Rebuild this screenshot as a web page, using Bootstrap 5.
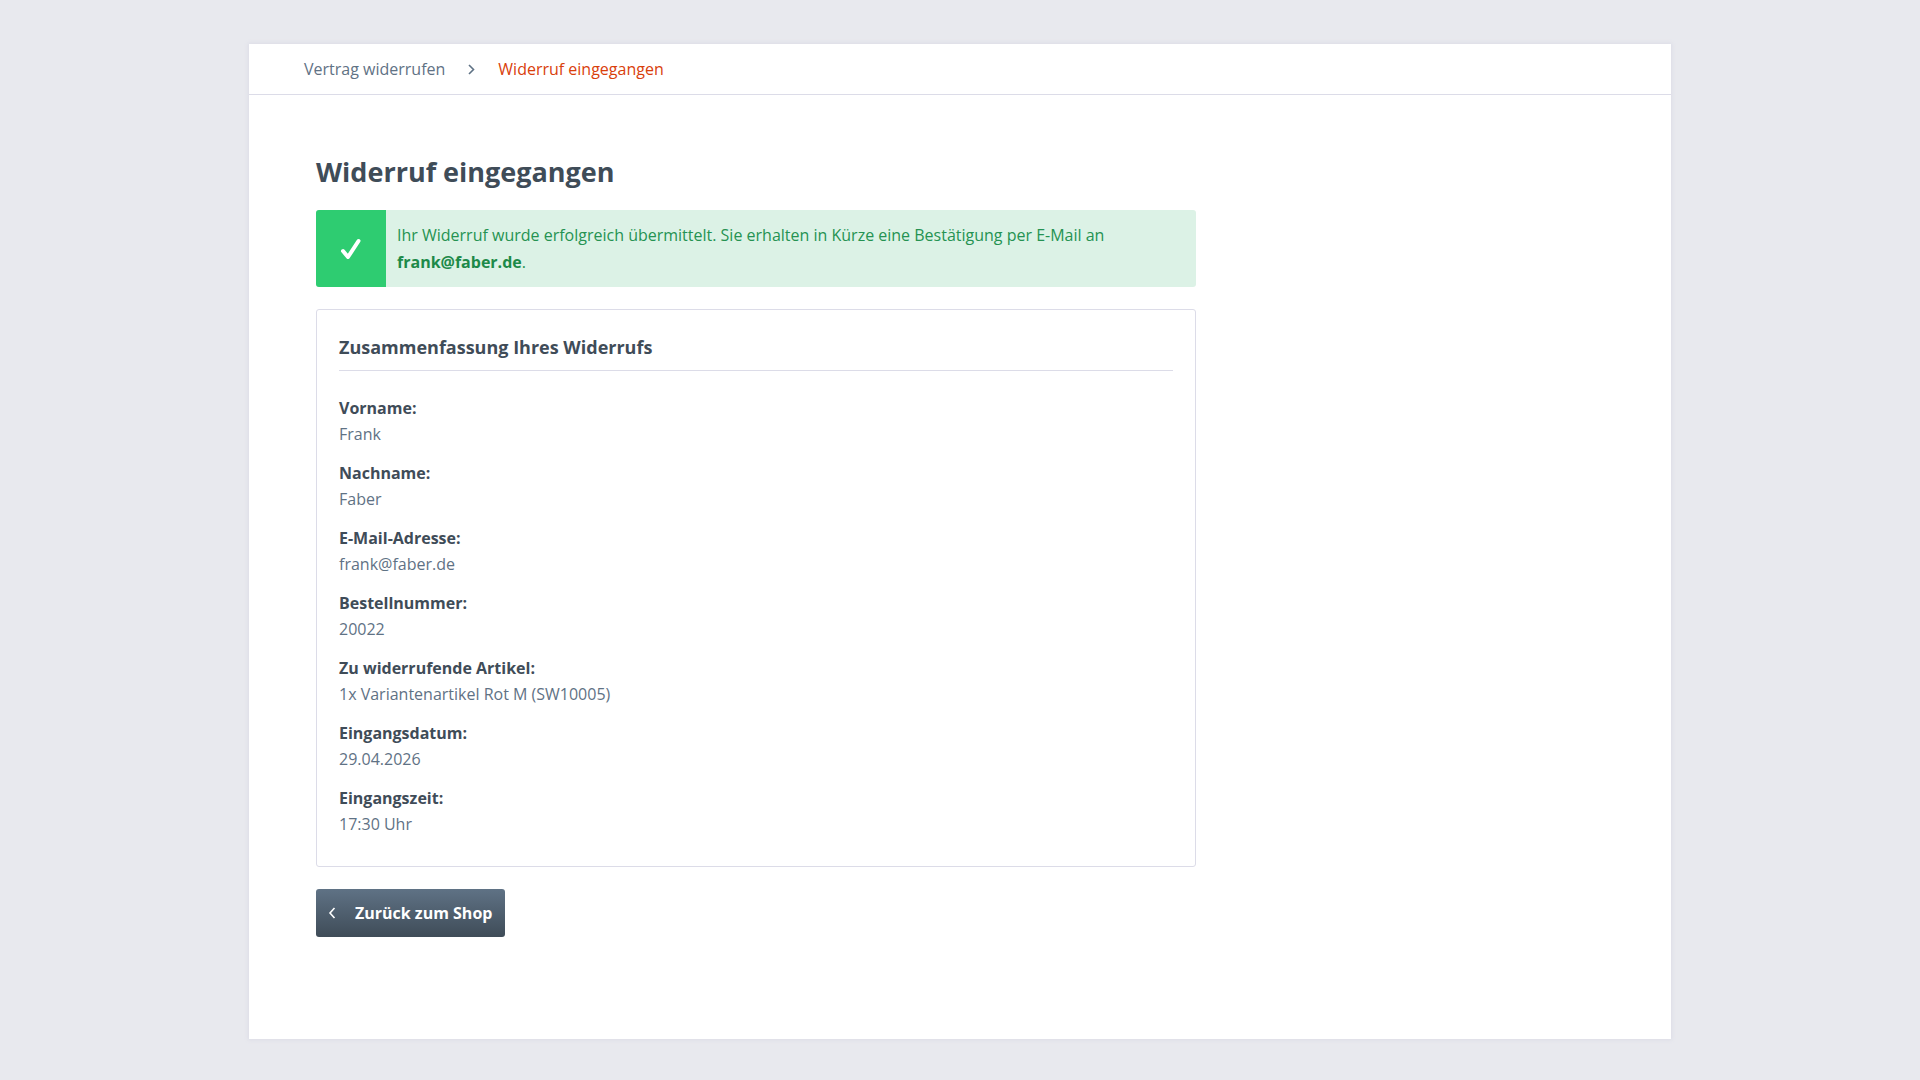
<!DOCTYPE html>
<html lang="de">
<head>
<meta charset="utf-8">
<meta name="viewport" content="width=device-width, initial-scale=1">
<title>Widerruf eingegangen</title>
<link href="https://cdn.jsdelivr.net/npm/bootstrap@5.3.0/dist/css/bootstrap.min.css" rel="stylesheet">
<style>
body { background: #e8e9ee; color: #5f7285; font-family: "Open Sans", "Noto Sans", sans-serif; font-size: 16px; line-height: 26px; }
.shop-page { max-width: 1422px; margin: 44px auto 40px; box-shadow: 0 0 4px 1px #dcdce6; }
.shop-crumbs { padding: 12px 55px; border-bottom: 1px solid #dcdce8; gap: 23px; }
.shop-crumbs a { color: #5f7285; }
.shop-crumbs .is-current { color: #d9400b; }
.shop-content { padding: 58px 67px 102px; }
.shop-main { max-width: 880px; }
.shop-title { font-size: 27px; line-height: 38px; color: #3f4c58; margin-bottom: 19px; }
.notice { background: #dcf2e6; color: #259252; border-radius: 3px; line-height: 27px; margin-bottom: 22px; }
.notice-icon { width: 70px; background: #2ecc71; }
.notice-text { padding: 12px 11px 11px; }
.notice-text strong { color: #1d8a49; }
.summary { border: 1px solid #dcdce8; border-radius: 3px; padding: 23px 22px; margin-bottom: 22px; }
.summary h2 { font-size: 18px; line-height: 28px; color: #3f4c58; padding-bottom: 9px; border-bottom: 1px solid #dcdce8; margin-bottom: 24px; }
.summary dl { row-gap: 13px; margin-bottom: 6px; }
.summary dt { color: #3f4c58; }
.btn-shop { color: #fff; font-size: 16px; line-height: 26px; padding: 11px 13px 11px 11px; gap: 19px; border: 0; border-radius: 3px; background: linear-gradient(#5f7285, #3f4c58); }
.btn-shop:hover { color: #fff; background: #5f7285; }
</style>
<script src="https://cdn.jsdelivr.net/npm/bootstrap@5.3.0/dist/js/bootstrap.bundle.min.js" defer></script>
</head>
<body>
<div class="shop-page bg-white">
  <nav class="shop-crumbs d-flex flex-wrap align-items-center" aria-label="Breadcrumb">
    <a class="text-decoration-none" href="#">Vertrag widerrufen</a>
    <svg width="7" height="11" viewBox="0 0 7 11" fill="none" stroke="#5f7285" stroke-width="1.600" aria-hidden="true"><path d="M1 1l4.500 4.500L1 10"/></svg>
    <a class="is-current text-decoration-none" href="#" aria-current="page">Widerruf eingegangen</a>
  </nav>
  <main class="shop-content">
    <div class="shop-main">
      <h1 class="shop-title fw-bold">Widerruf eingegangen</h1>
      <div class="notice d-flex overflow-hidden" role="status">
        <div class="notice-icon d-flex flex-shrink-0 align-items-center justify-content-center">
          <svg width="22" height="22" viewBox="0 0 22 22" fill="none" stroke="#fff" stroke-width="4" stroke-linecap="round" stroke-linejoin="round" aria-hidden="true"><path d="M3 13l5 6L18.500 3"/></svg>
        </div>
        <div class="notice-text">Ihr Widerruf wurde erfolgreich übermittelt. Sie erhalten in Kürze eine Bestätigung per E-Mail an <strong>frank@faber.de</strong>.</div>
      </div>
      <section class="summary">
        <h2 class="fw-bold">Zusammenfassung Ihres Widerrufs</h2>
        <dl class="d-flex flex-column">
          <div><dt>Vorname:</dt><dd class="mb-0">Frank</dd></div>
          <div><dt>Nachname:</dt><dd class="mb-0">Faber</dd></div>
          <div><dt>E-Mail-Adresse:</dt><dd class="mb-0">frank@faber.de</dd></div>
          <div><dt>Bestellnummer:</dt><dd class="mb-0">20022</dd></div>
          <div><dt>Zu widerrufende Artikel:</dt><dd class="mb-0">1x Variantenartikel Rot M (SW10005)</dd></div>
          <div><dt>Eingangsdatum:</dt><dd class="mb-0">29.04.2026</dd></div>
          <div><dt>Eingangszeit:</dt><dd class="mb-0">17:30 Uhr</dd></div>
        </dl>
      </section>
      <a class="btn btn-shop d-inline-flex align-items-center fw-bold" href="#">
        <svg width="9" height="12" viewBox="0 0 9 12" fill="none" stroke="#fff" stroke-width="1.600" aria-hidden="true"><path d="M7.500 1L3 6l4.500 5"/></svg>
        Zurück zum Shop
      </a>
    </div>
  </main>
</div>
</body>
</html>
